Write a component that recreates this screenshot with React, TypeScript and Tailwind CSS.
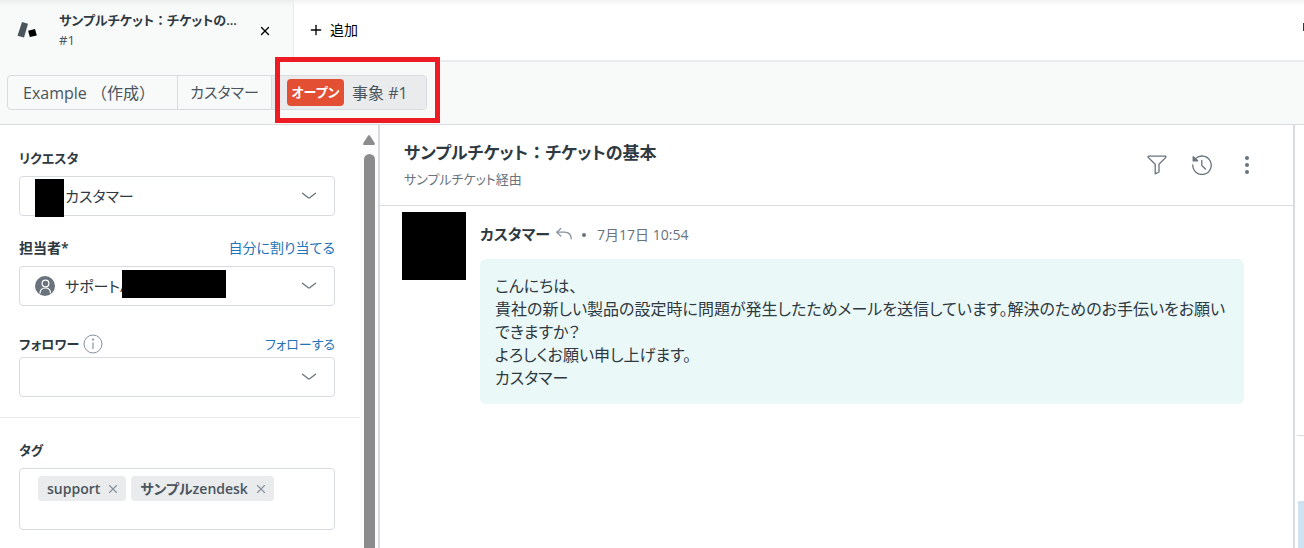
import React, { useState } from 'react';
import { X, Plus } from 'lucide-react';

interface SelectBoxProps {
  id: string;
  value: string;
  children?: React.ReactNode;
}

const ChevronIcon = () => (
  <svg
    className="pointer-events-none absolute right-[18px] top-1/2 -mt-1 h-2 w-4"
    viewBox="0 0 16 8"
    fill="none"
    stroke="#68737d"
    strokeWidth="1.3"
    strokeLinecap="round"
  >
    <path d="M1.5 1.2 L7 5.6 Q8 6.3 9 5.6 L14.5 1.2" />
  </svg>
);

// Full-width punctuation keeps its whole cell, unlike the kana around it
const Wide = ({ children }: { children: React.ReactNode }) => (
  <span className="[font-feature-settings:normal]">{children}</span>
);

function SelectBox({ id, value, children }: SelectBoxProps) {
  return (
    <div className="relative">
      <select
        id={id}
        defaultValue={value}
        className="block h-10 w-full appearance-none rounded border border-[#d8dcde] bg-white pl-[45px] pr-10 text-[15px] text-[#2f3941]"
      >
        <option value={value}>{value}</option>
      </select>
      {children}
      <ChevronIcon />
    </div>
  );
}

export default function App() {
  const [tags, setTags] = useState(['support', 'サンプルzendesk']);

  const removeTag = (tag: string) => {
    setTags(tags.filter((t) => t !== tag));
  };

  return (
    <div className="flex min-h-screen flex-col overflow-hidden bg-white font-['Open_Sans','Noto_Sans_CJK_JP',sans-serif] text-[#2f3941] [font-feature-settings:'palt']">
      {/* Tabs */}
      <header className="flex h-[62px] items-stretch">
        <div className="flex w-[294px] shrink-0 items-center border-r border-[#e9ebed] bg-[#f8f9f9] pl-[17px] pr-[21px] shadow-[inset_0_8px_8px_-8px_#0000001a]">
          <svg className="mr-[22px] h-5 w-5 shrink-0" viewBox="0 0 20 20">
            <path d="M5 1 L11 2.8 L7 16.5 L0.5 14.8 Z" fill="#49545c" />
            <path d="M11.2 9.8 L18 8 L19.8 14.5 L12.8 16 Z" fill="#000" />
          </svg>
          <div className="min-w-0 flex-1 pb-0.5 text-[13px] leading-5">
            <div className="whitespace-nowrap font-semibold">
              サンプルチケット<Wide>：</Wide>チケットの...
            </div>
            <div className="text-[#49545c]">#1</div>
          </div>
          <button aria-label="タブを閉じる" className="shrink-0">
            <X className="h-3.5 w-3.5 text-black" strokeWidth={2.4} />
          </button>
        </div>
        <div className="flex flex-1 items-center justify-between border-b-2 border-[#e9ebed] pl-[14px] shadow-[inset_0_8px_8px_-8px_#0000001a]">
          <button className="flex items-center gap-1.5 text-sm text-black">
            <Plus className="h-4 w-4" strokeWidth={2} />
            追加
          </button>
          <span className="mb-1.5 h-2 w-px bg-[#2f3941]" />
        </div>
      </header>

      {/* Breadcrumb */}
      <nav className="flex h-[63px] items-start border-b border-[#d8dcde] bg-[#f8f9f9] pl-[7px] pt-[13px]">
        <div className="flex h-[35px] rounded border border-[#d8dcde] text-base text-[#49545c]">
          <button className="w-[170px] whitespace-nowrap border-r border-[#d8dcde] pl-[15px] text-left">
            Example <Wide>（作成）</Wide>
          </button>
          <button className="w-[94px] whitespace-nowrap border-r border-[#d8dcde] text-[15px]">カスタマー</button>
          <div className="relative">
            <button className="flex h-full w-[154px] items-center gap-2 whitespace-nowrap rounded-r bg-[#e9ebed] pl-[15px]">
              <span className="flex h-[27px] w-[57px] items-center justify-center rounded bg-[#e34f32] text-[13px] font-semibold text-white">
                オープン
              </span>
              事象 #1
            </button>
            <div className="pointer-events-none absolute -bottom-[14px] -right-[14px] -top-[19px] left-[3px] border-[5px] border-[#ed1c24]" />
          </div>
        </div>
      </nav>

      <div className="flex flex-1 items-stretch">
        {/* Ticket fields */}
        <aside className="flex w-[380px] shrink-0 border-r-2 border-[#d8dcde]">
          <form className="min-w-0 flex-1 text-[13px] leading-5">
            <div className="border-b border-[#e9ebed] pb-5 pl-[19px] pr-[25px] pt-[23px]">
              <label htmlFor="requester" className="mb-2 block font-semibold">
                リクエスタ
              </label>
              <SelectBox id="requester" value="カスタマー">
                <span className="absolute left-4 top-[3px] h-[38px] w-[29px] bg-black" />
              </SelectBox>

              <div className="mb-2 mt-[22px] flex justify-between">
                <label htmlFor="assignee" className="text-sm font-semibold">
                  担当者*
                </label>
                <a href="#assign" className="text-sm text-[#1f73b7]">
                  自分に割り当てる
                </a>
              </div>
              <SelectBox id="assignee" value="サポート/">
                <svg className="absolute left-4 top-[10px] h-5 w-5" viewBox="0 0 20 20">
                  <circle cx="10" cy="10" r="10" fill="#68737d" />
                  <g fill="none" stroke="#fff" strokeWidth="1.2">
                    <circle cx="10.5" cy="7.5" r="3.4" />
                    <path d="M5 17.5 C5 13.2 7.2 12 10.5 12 S15.5 13.2 15.5 17.2" />
                  </g>
                </svg>
                <span className="absolute left-[103px] top-1 h-7 w-[104px] bg-black" />
              </SelectBox>

              <div className="mb-[3px] mt-7 flex items-center justify-between">
                <div className="flex items-center gap-1">
                  <label htmlFor="followers" className="font-semibold">
                    フォロワー
                  </label>
                  <svg className="h-5 w-5" viewBox="0 0 20 20" fill="none" stroke="#87929d">
                    <circle cx="10" cy="10" r="9" />
                    <path d="M10 8.5v6.5" strokeWidth="1.2" />
                    <circle cx="10" cy="5.6" r="1.1" fill="#87929d" stroke="none" />
                  </svg>
                </div>
                <a href="#follow" className="text-[#1f73b7]">
                  フォローする
                </a>
              </div>
              <SelectBox id="followers" value="" />
            </div>

            <div className="pl-[19px] pr-[25px] pt-[22px]">
              <label htmlFor="tags" className="mb-2 block font-semibold">
                タグ
              </label>
              <div className="flex min-h-[62px] flex-wrap content-start gap-x-[5px] rounded border border-[#d8dcde] pl-[18px] pt-[7px]">
                {tags.map((tag) => (
                  <span
                    key={tag}
                    className="flex h-[25px] items-center gap-1.5 rounded-sm bg-[#e9ebed] pl-[9px] pr-1.5 text-sm font-semibold text-[#49545c]"
                  >
                    {tag}
                    <button type="button" aria-label={`${tag}を削除`} onClick={() => removeTag(tag)}>
                      <X className="h-3.5 w-3.5 text-[#87929d]" strokeWidth={2} />
                    </button>
                  </span>
                ))}
                <input id="tags" className="h-5 w-10 min-w-0 outline-none" />
              </div>
            </div>
          </form>

          {/* Scrollbar */}
          <div className="flex w-[18px] flex-col items-center bg-[#fcfcfc] pt-[10px]">
            <svg className="h-[10px] w-3 shrink-0" viewBox="0 0 12 10" fill="#8b8b8b">
              <path d="M5 0.7 Q6 -0.5 7 0.7 L11.7 8 Q12.3 10 11 10 H1 Q-0.3 10 0.3 8 Z" />
            </svg>
            <div className="mt-[9px] w-[11px] flex-1 rounded-t-full bg-[#8b8b8b]" />
          </div>
        </aside>

        {/* Conversation */}
        <main className="min-w-0 flex-1">
          <div className="flex h-[81px] items-center justify-between border-b border-[#d8dcde] pl-6 pr-9">
            <div>
              <h1 className="text-[17px] font-semibold leading-7">
                サンプルチケット<Wide>：</Wide>チケットの基本
              </h1>
              <p className="text-[13px] leading-6 text-[#68737d]">サンプルチケット経由</p>
            </div>
            <div className="flex items-center gap-[25px] text-[#68737d]">
              <button aria-label="フィルター">
                <svg className="h-5 w-5" viewBox="0 0 20 20" fill="none" stroke="currentColor" strokeWidth="1.3" strokeLinejoin="round">
                  <path d="M1.2 1.2 H18.8 V2.4 L12 9.2 V17 L8.2 18.8 V9.2 L1.2 2.4 Z" />
                </svg>
              </button>
              <button aria-label="履歴">
                <svg className="h-5 w-5" viewBox="0 0 20 20" fill="none" stroke="currentColor" strokeWidth="1.3" strokeLinecap="round" strokeLinejoin="round">
                  <path d="M3.6 3.6 A9.2 9.2 0 1 1 0.8 10" />
                  <path d="M1.2 1.6 V5.8 H5.6 Z" fill="currentColor" />
                  <path d="M9.8 5.5 V10.5 L13.5 14" />
                </svg>
              </button>
              <button aria-label="その他">
                <svg className="h-5 w-5" viewBox="0 0 20 20" fill="currentColor">
                  <circle cx="10" cy="3" r="2" />
                  <circle cx="10" cy="10" r="2" />
                  <circle cx="10" cy="17" r="2" />
                </svg>
              </button>
            </div>
          </div>

          <article className="flex items-start gap-[14px] pl-[22px] pr-[49px] pt-1.5">
            <div className="h-[68px] w-16 shrink-0 bg-black" />
            <div className="min-w-0 flex-1 pt-[11px]">
              <div className="flex h-6 items-center text-sm text-[#68737d]">
                <span className="text-[15px] font-semibold text-[#2f3941]">カスタマー</span>
                <svg className="ml-1.5 h-4 w-4" viewBox="0 0 16 16" fill="none" stroke="#87929d" strokeWidth="1.2" strokeLinecap="round" strokeLinejoin="round">
                  <path d="M4.8 1.5 L0.8 5.2 L4.8 9" />
                  <path d="M1 5.2 H8.5 C13 5.2 15.2 8 15.2 12" />
                </svg>
                <span className="ml-[10px] h-1 w-1 rounded-full bg-[#68737d]" />
                <time className="ml-[11px]">7月17日 10:54</time>
              </div>
              <div className="mt-3 rounded-md bg-[#eaf8f8] px-[15px] pb-[14px] pt-4 text-base leading-[23px]">
                こんにちは、
                <br />
                貴社の新しい製品の設定時に問題が発生したためメールを送信しています。解決のためのお手伝いをお願いできますか？
                <br />
                よろしくお願い申し上げます。
                <br />
                カスタマー
              </div>
            </div>
          </article>
        </main>

        {/* Apps panel */}
        <aside className="flex w-[11px] shrink-0 flex-col border-l-2 border-[#d8dcde]">
          <div className="ml-0.5 h-[311px] border-b border-[#d8dcde]" />
          <div className="ml-[3px] mt-[65px] flex-1 bg-[#cee2f2]" />
        </aside>
      </div>
    </div>
  );
}
